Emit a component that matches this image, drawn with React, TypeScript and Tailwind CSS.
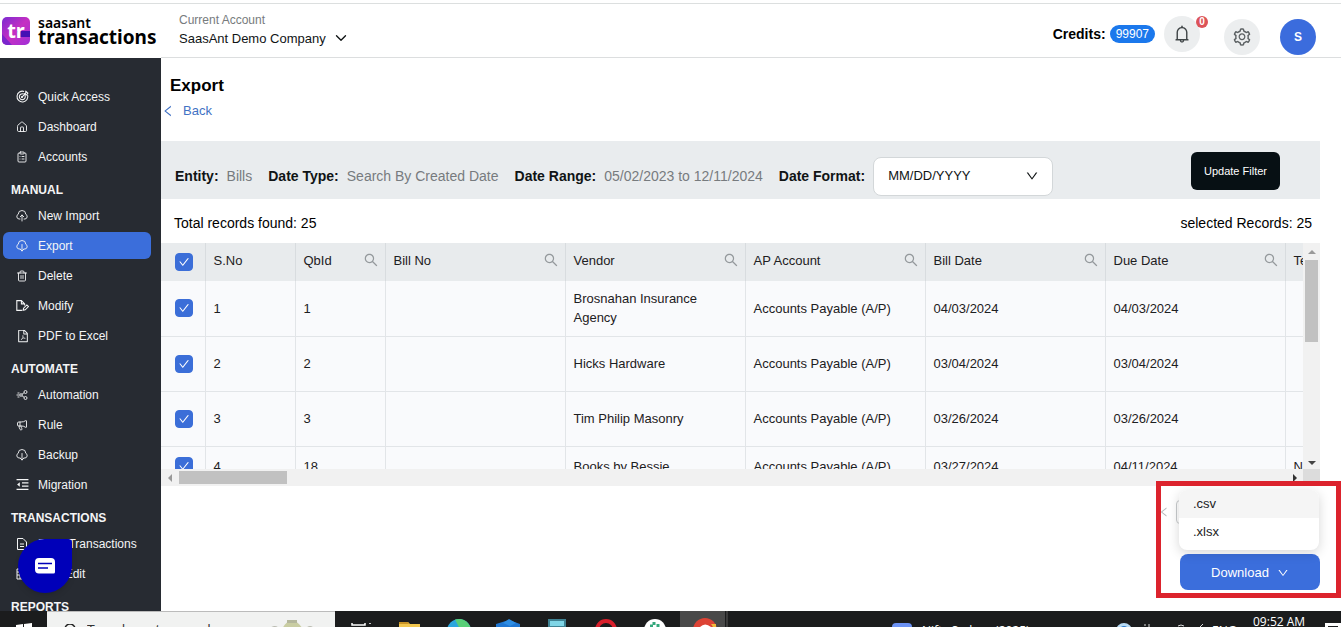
import { ReactNode, useState } from "react";
import {
  AiOutlineBell,
  AiOutlineCheck,
  AiOutlineDown,
  AiOutlineFilePdf,
  AiOutlineLeft,
  AiOutlineSearch,
  AiOutlineSetting,
} from "react-icons/ai";
import { ChevronDown, ClipboardList, House, Megaphone, Trash2 } from "lucide-react";

type NavItem = { label: string; icon: ReactNode };
type NavGroup = { title?: string; items: NavItem[] };

const iconClass = "size-3";

const TargetIcon = () => (
  <svg viewBox="0 0 24 24" className="size-[13px]" fill="none" stroke="currentColor" strokeWidth="2">
    <path d="M15 2.600A10 10 0 1 0 21.400 9" />
    <path d="M13.500 7.200A5.500 5.500 0 1 0 16.800 10.500" />
    <path d="M11 13l7-7M18 6V2l4 4-2.500 3H15V5.500" strokeLinejoin="round" />
    <circle cx="11" cy="13" r="1" />
  </svg>
);

const CloudArrowIcon = ({ up = false }: { up?: boolean }) => (
  <svg viewBox="0 0 24 24" className="size-3" fill="none" stroke="currentColor" strokeWidth="1.800" strokeLinecap="round">
    <path d="M8 18H6a5 5 0 0 1-1.500-9.500A7.500 7.500 0 0 1 19.500 8.500 5 5 0 0 1 18 18h-2" />
    {up ? <path d="M12 22V10M8.500 13.500L12 10l3.500 3.500" /> : <path d="M12 9v13M8.500 18.500L12 22l3.500-3.500" />}
  </svg>
);

const FileEditIcon = () => (
  <svg viewBox="0 0 24 24" className="size-[13px]" fill="none" stroke="currentColor" strokeWidth="2">
    <path d="M11 21H1.500V3H10l6 6v3M10 3v6h6" />
    <path d="M13 21l1-4 6-6 3 3-6 6z" />
  </svg>
);

const NodesIcon = () => (
  <svg viewBox="0 0 24 24" className="size-3" fill="none" stroke="currentColor" strokeWidth="1.800">
    <circle cx="19" cy="6" r="3" />
    <circle cx="19" cy="18" r="3" />
    <circle cx="10" cy="12" r="2.500" />
    <path d="M1 12h6M3 8h4M3 16h4M12 10.500l4-3M12 13.500l4 3" />
  </svg>
);

const MigrationIcon = () => (
  <svg viewBox="0 0 24 24" className="size-[13px]" fill="none" stroke="currentColor" strokeWidth="2">
    <path d="M1 3h22M11 9h12M11 15h12M1 21h22" />
    <path d="M7 8v8l-5-4z" fill="currentColor" stroke="none" />
  </svg>
);

const DocumentIcon = () => (
  <svg viewBox="0 0 24 24" className="size-3" fill="none" stroke="currentColor" strokeWidth="2">
    <path d="M3 1h11l7 7v15H3zM8 12h8M8 17h8" strokeLinejoin="round" />
  </svg>
);

const ListIcon = () => (
  <svg viewBox="0 0 24 24" className="size-3" fill="none" stroke="currentColor" strokeWidth="2">
    <path d="M20 2H2v20h18zM2 8h18M2 14h18M8 8v14" />
  </svg>
);

const navGroups: NavGroup[] = [
  {
    items: [
      { label: "Quick Access", icon: <TargetIcon /> },
      { label: "Dashboard", icon: <House className={iconClass} strokeWidth={1.8} /> },
      { label: "Accounts", icon: <ClipboardList className={iconClass} strokeWidth={1.8} /> },
    ],
  },
  {
    title: "MANUAL",
    items: [
      { label: "New Import", icon: <CloudArrowIcon up /> },
      { label: "Export", icon: <CloudArrowIcon /> },
      { label: "Delete", icon: <Trash2 className={iconClass} strokeWidth={1.8} /> },
      { label: "Modify", icon: <FileEditIcon /> },
      { label: "PDF to Excel", icon: <AiOutlineFilePdf className="size-[14px]" /> },
    ],
  },
  {
    title: "AUTOMATE",
    items: [
      { label: "Automation", icon: <NodesIcon /> },
      { label: "Rule", icon: <Megaphone className={iconClass} strokeWidth={1.8} /> },
      { label: "Backup", icon: <CloudArrowIcon /> },
      { label: "Migration", icon: <MigrationIcon /> },
    ],
  },
  {
    title: "TRANSACTIONS",
    items: [
      { label: "Bank Transactions", icon: <DocumentIcon /> },
      { label: "Bulk Edit", icon: <ListIcon /> },
    ],
  },
  { title: "REPORTS", items: [] },
];

const columns = [
  { label: "S.No", search: false },
  { label: "QbId", search: true },
  { label: "Bill No", search: true },
  { label: "Vendor", search: true },
  { label: "AP Account", search: true },
  { label: "Bill Date", search: true },
  { label: "Due Date", search: true },
  { label: "Terms", search: true },
];

const rows = [
  ["1", "1", "", "Brosnahan Insurance Agency", "Accounts Payable (A/P)", "04/03/2024", "04/03/2024", ""],
  ["2", "2", "", "Hicks Hardware", "Accounts Payable (A/P)", "03/04/2024", "03/04/2024", ""],
  ["3", "3", "", "Tim Philip Masonry", "Accounts Payable (A/P)", "03/26/2024", "03/26/2024", ""],
  ["4", "18", "", "Books by Bessie", "Accounts Payable (A/P)", "03/27/2024", "04/11/2024", "Net 15"],
];

function Logo() {
  return (
    <a href="#home" className="flex w-[161px] shrink-0 items-center gap-2 pl-0.5 text-black">
      <svg viewBox="0 0 28 28" className="size-7 shrink-0">
        <defs>
          <linearGradient id="logoFill" x1="0" y1="0" x2="1" y2="1">
            <stop offset="0" stopColor="#7a2bd2" />
            <stop offset="0.5" stopColor="#c52fc2" />
            <stop offset="1" stopColor="#a02fd8" />
          </linearGradient>
        </defs>
        <rect width="28" height="28" rx="5" fill="url(#logoFill)" />
        <path d="M15 14h13v6H17z" fill="#4410b4" />
        <path d="M0 17l10 11H5a5 5 0 0 1-5-5z" fill="#7a26cc" />
        <text x="14" y="21" textAnchor="middle" fill="#fff" fontSize="20" fontWeight="700" fontFamily="Noto Sans, sans-serif">
          tr
        </text>
      </svg>
      <span className="flex flex-col font-['Noto_Sans',sans-serif]">
        <span className="text-[14px] leading-[13px] font-semibold">saasant</span>
        <span className="text-[19px] leading-[17px] font-bold">transactions</span>
      </span>
    </a>
  );
}

function Header() {
  return (
    <header className="flex h-[55px] shrink-0 border-t border-[#dcdfdf]">
      <Logo />
      <div className="flex flex-1 items-center justify-between border-b border-[#dcdedf] pr-[25px] pl-[18px]">
        <button type="button" className="flex flex-col pb-0.5 text-left text-[13px] leading-[17px]">
          <span className="text-xs leading-[17px] text-[#777b7d]">Current Account</span>
          <span className="flex items-center gap-1.5">
            SaasAnt Demo Company
            <ChevronDown className="size-[18px]" strokeWidth={1.8} />
          </span>
        </button>
        <div className="flex items-center pt-3">
          <div className="mb-1.5 flex items-center">
            <span className="text-sm font-bold text-black">Credits:</span>
            <span className="ml-1 flex h-[18px] items-center rounded-full bg-[#1b78ec] px-1.5 text-xs text-white">99907</span>
            <button
              type="button"
              aria-label="Notifications"
              className="relative ml-[9px] flex size-9 items-center justify-center rounded-full bg-[#eceeef] text-[#3f4547]"
            >
              <AiOutlineBell className="size-5" />
              <span className="absolute top-0 -right-2 flex size-3 items-center justify-center rounded-full bg-[#dc5358] text-[10px] font-bold text-white">
                0
              </span>
            </button>
          </div>
          <button
            type="button"
            aria-label="Settings"
            className="ml-6 flex size-9 items-center justify-center rounded-full bg-[#eceeef] text-[#5c6163]"
          >
            <AiOutlineSetting className="size-5" />
          </button>
          <button type="button" className="ml-5 size-9 rounded-full bg-[#3b6cdd] text-xs font-bold text-white">
            S
          </button>
        </div>
      </div>
    </header>
  );
}

function Sidebar() {
  return (
    <nav className="w-[161px] shrink-0 overflow-hidden bg-[#272b32] pt-[25px] text-xs text-[#f4f5f6]">
      {navGroups.map((group, index) => (
        <div key={index}>
          {group.title ? <h2 className="h-8 pt-3 pl-[11px] text-[12px] leading-4 font-bold">{group.title}</h2> : null}
          <ul className="flex flex-col gap-[3px]">
            {group.items.map((item) => (
              <li key={item.label} className="pr-2.5 pl-[3px]">
                <a
                  href="#nav"
                  className={`flex h-[27px] items-center rounded-md pl-3 whitespace-nowrap ${item.label === "Export" ? "bg-[#3b6edb]" : ""}`}
                >
                  <span className="flex w-[23px] justify-start pl-px">{item.icon}</span>
                  {item.label}
                </a>
              </li>
            ))}
          </ul>
        </div>
      ))}
    </nav>
  );
}

function Filter({ label, value }: { label: string; value: string }) {
  return (
    <p className="mr-4 flex gap-2">
      <span className="font-bold">{label}</span>
      <span className="text-[#777b7e]">{value}</span>
    </p>
  );
}

function FilterBar() {
  return (
    <section className="flex h-[58px] items-center justify-between bg-[#e9ecee] pr-10 pl-[14px] whitespace-nowrap">
      <div className="flex items-center pt-3 text-sm">
        <Filter label="Entity:" value="Bills" />
        <Filter label="Date Type:" value="Search By Created Date" />
        <Filter label="Date Range:" value="05/02/2023 to 12/11/2024" />
        <label htmlFor="date-format" className="font-bold">
          Date Format:
        </label>
        <div className="relative ml-2">
          <select
            id="date-format"
            className="block h-[39px] w-[180px] appearance-none rounded-lg border border-[#d3d7d9] bg-white px-[14px] text-[13px]"
          >
            <option>MM/DD/YYYY</option>
          </select>
          <AiOutlineDown className="pointer-events-none absolute top-3 right-[14px] size-[14px]" />
        </div>
      </div>
      <button type="button" className="mt-0.5 h-[38px] rounded-md bg-[#071014] px-[13px] text-[11px] text-white">
        Update Filter
      </button>
    </section>
  );
}

function CheckBox({ label }: { label: string }) {
  const [checked, setChecked] = useState(true);
  return (
    <label className="relative ml-[14px] block size-[18px]">
      <input
        type="checkbox"
        aria-label={label}
        checked={checked}
        onChange={(event) => setChecked(event.target.checked)}
        className="block size-[18px] appearance-none rounded border border-[#9bb2e8] bg-white checked:border-[#3b6ed8] checked:bg-[#3b6ed8]"
      />
      <AiOutlineCheck className="pointer-events-none absolute top-[3px] left-[3px] size-3 text-white" />
    </label>
  );
}

function BillsTable() {
  return (
    <div className="grid grid-cols-[1fr_17px] grid-rows-[226px_17px] bg-[#f1f1f1]">
      <div className="overflow-hidden">
        <table className="w-[1304px] table-fixed border-collapse bg-[#f9fafc] text-left text-[13px] leading-[19px] text-[#1d2022]">
          <colgroup>
            <col className="w-[44px]" />
            <col className="w-[90px]" />
            <col className="w-[90px]" />
            <col className="w-[180px]" />
            <col className="w-[180px]" />
            <col className="w-[180px]" />
            <col className="w-[180px]" />
            <col className="w-[180px]" />
            <col className="w-[180px]" />
          </colgroup>
          <thead>
            <tr className="h-[38px] bg-[#e8ebed]">
              <th className="border-r border-[#d8dcdf]">
                <CheckBox label="Select all" />
              </th>
              {columns.map((column) => (
                <th key={column.label} className="border-r border-[#d8dcdf] pr-1.5 pl-2 font-normal">
                  <div className="flex items-center justify-between pb-1">
                    {column.label}
                    {column.search ? <AiOutlineSearch className="size-4 text-[#94999c]" /> : null}
                  </div>
                </th>
              ))}
            </tr>
          </thead>
          <tbody>
            {rows.map((row) => (
              <tr key={row[0]} className="h-[55px] border-b border-[#e2e5e8] last:h-10">
                <td className="border-r border-[#e2e5e8]">
                  <CheckBox label={`Select row ${row[0]}`} />
                </td>
                {row.map((cell, index) => (
                  <td key={index} className="border-r border-[#e2e5e8] pr-4 pl-2">
                    {cell}
                  </td>
                ))}
              </tr>
            ))}
          </tbody>
        </table>
      </div>
      <div className="flex flex-col items-center pt-[7px] pb-1">
        <svg viewBox="0 0 8 4" className="h-1 w-2 fill-[#999]">
          <path d="M0 4l4-4 4 4z" />
        </svg>
        <div className="mt-1.5 h-[82px] w-[13px] bg-[#c1c1c1]" />
        <svg viewBox="0 0 8 4" className="mt-auto h-1 w-2 fill-[#444]">
          <path d="M0 0l4 4 4-4z" />
        </svg>
      </div>
      <div className="flex items-center pl-[7px]">
        <svg viewBox="0 0 4 8" className="h-2 w-1 fill-[#999]">
          <path d="M4 0L0 4l4 4z" />
        </svg>
        <div className="ml-[7px] h-[13px] w-[108px] bg-[#c1c1c1]" />
        <svg viewBox="0 0 4 8" className="mr-1.5 ml-auto h-2 w-1 fill-[#333]">
          <path d="M0 0l4 4-4 4z" />
        </svg>
      </div>
      <div className="bg-[#dcdcdc]" />
    </div>
  );
}

function DownloadMenu() {
  return (
    <div className="relative ml-auto flex w-[164px] flex-col pt-1">
      {/* highlight frame around the download options */}
      <div className="pointer-events-none absolute -top-[5px] -right-[21px] -bottom-2 left-0 z-20 border-[5px] border-[#dc232d]" />
      <div className="absolute top-[14px] left-0.5 flex items-center gap-1.5 text-[#b5b8ba]">
        <AiOutlineLeft className="size-3" />
        <span className="size-6 rounded border border-[#c8cbcd]" />
      </div>
      <ul className="z-10 ml-[23px] flex h-[60px] w-[140px] flex-col rounded-lg bg-white text-[13px] text-[#222] shadow-[0_3px_12px_rgba(0,0,0,0.16)]">
        <li>
          <button type="button" className="block h-7 w-full rounded-t-lg bg-[#f5f5f5] px-[14px] text-left">
            .csv
          </button>
        </li>
        <li>
          <button type="button" className="block h-7 w-full px-[14px] text-left">
            .xlsx
          </button>
        </li>
      </ul>
      <button
        type="button"
        className="mt-1 ml-6 flex h-9 w-[140px] items-center justify-center gap-2 rounded-lg bg-[#3b6edc] pt-0.5 text-[13px] text-white"
      >
        Download
        <AiOutlineDown className="size-3" />
      </button>
    </div>
  );
}

function Taskbar() {
  return (
    <footer className="h-4 shrink-0 overflow-hidden bg-[#1b1c1d] font-['Open_Sans',sans-serif] text-white">
      <div className="flex h-10 items-start">
        <button type="button" aria-label="Start" className="flex w-[47px] justify-center pt-3">
          <svg viewBox="0 0 16 16" className="size-4 fill-white">
            <path d="M0 2l7-1v7H0zM8 1l8-1v8H8zM0 9h7v6l-7-1zM8 9h8v7l-8-1z" />
          </svg>
        </button>
        <label className="flex h-10 w-[288px] items-center border-t border-[#bbb] bg-[#f1f2f1] pl-4 text-[#333]">
          <svg viewBox="0 0 16 16" className="size-4" fill="none" stroke="#222" strokeWidth="1.500">
            <circle cx="7" cy="5" r="5" />
            <path d="M4 9l-4 5" />
          </svg>
          <input
            type="text"
            aria-label="Search"
            placeholder="Type here to search"
            className="ml-2 w-[180px] pb-1 text-[14px] placeholder:text-[#333]"
          />
          <svg viewBox="0 0 50 34" className="h-[34px] w-[50px]">
            <path d="M15 15q3-9 10-9t11 9v19H15z" fill="#c9cda2" />
            <path d="M20 5h10v3H20z" fill="#b4b79c" />
            <path d="M2 14q6-6 11 0v10H2zM38 14q5-6 10 0v10H38z" fill="#b9bbb0" />
          </svg>
        </label>
        <svg viewBox="0 0 393 16" className="h-4 w-[393px]">
          <path d="M17 12v2h13v-2M35 12v1" fill="none" stroke="#fff" strokeWidth="1.500" />
          <path d="M64 11h9l2 2h10v3H64z" fill="#f2c64e" />
          <path d="M64 11h9l1 2H64z" fill="#c99325" />
          <circle cx="124" cy="20" r="12" fill="#2ca6dd" />
          <path d="M120 8.600A12 12 0 0 1 136 20h-10z" fill="#58cf77" />
          <path d="M161 16v-3l13-4 11 4v3z" fill="#1f76d2" />
          <path d="M168 12l6-4 7 4-6 3z" fill="#2d8de4" />
          <path d="M213 8h18v8h-18z" fill="#3f8293" />
          <path d="M215 10h14v5h-14z" fill="#7fd5e6" />
          <circle cx="271" cy="19" r="9" fill="none" stroke="#d91f2b" strokeWidth="4" />
          <circle cx="320" cy="19" r="11" fill="#fff" />
          <path d="M319 11v3M323 13v3M315 15h3" stroke="#34a77c" strokeWidth="3" />
          <path d="M345 0h45v16h-45z" fill="#494949" />
          <path d="M391 0h2v16h-2z" fill="#3a3a3a" />
          <circle cx="370" cy="19" r="12" fill="#dd4335" />
          <path d="M365 16q5-5 11 0z" fill="#fff" />
          <path d="M376 13h5v3h-3z" fill="#f0b93a" />
        </svg>
        <span className="mt-3 ml-auto h-5 w-5 rounded bg-[#6c92f4]" />
        <span className="mt-3 ml-2.5 w-[194px] text-xs leading-4">Nifty Smlcap (2025)</span>
        <span className="mt-3 size-4 rounded-full border-[3px] border-[#b8dbf5] bg-[#2a78c9]" />
        <svg viewBox="0 0 80 16" className="h-4 w-20" fill="none" stroke="#ddd">
          <path d="M12 14h2M17 13v3M46 15q3-2 6 0M68 16l3-3" />
        </svg>
        <span className="mt-3 w-[41px] text-xs leading-4">ENG</span>
        <time className="mt-[3px] w-[72px] text-xs leading-4 whitespace-nowrap">09:52 AM</time>
        <span className="mt-3 size-4 border-[3px] border-white" />
      </div>
    </footer>
  );
}

function ChatButton() {
  return (
    <button
      type="button"
      aria-label="Open chat"
      className="fixed bottom-[34px] left-[18px] z-30 flex size-[54px] items-center justify-center rounded-[27px] rounded-tr-sm bg-[#0000b9] shadow-md"
    >
      <svg viewBox="0 0 20 16" className="h-4 w-5">
        <path d="M4 0h12a4 4 0 0 1 4 4v10a1.500 1.500 0 0 1-1.500 1.500H4a4 4 0 0 1-4-4V4a4 4 0 0 1 4-4z" fill="#fff" />
        <path d="M3 5.500h14M3 10h10" stroke="#0000b9" strokeWidth="1.500" />
      </svg>
    </button>
  );
}

export default function App() {
  return (
    <div className="flex h-screen flex-col overflow-hidden bg-white pt-[3px] font-['Liberation_Sans',Arial,sans-serif] text-[#101415]">
      <Header />
      <div className="flex min-h-0 flex-1">
        <Sidebar />
        <main className="min-w-0 flex-1 pr-[21px]">
          <h1 className="pt-4 pl-[9px] text-[17px] leading-6 font-bold text-black">Export</h1>
          <a href="#back" className="mt-[3px] flex w-fit items-center gap-2 text-[13px] leading-5 text-[#4272c4]">
            <AiOutlineLeft className="size-[14px]" />
            Back
          </a>
          <div className="mt-5">
            <FilterBar />
          </div>
          <div className="flex h-[44px] items-center justify-between pt-1 pr-2 pl-[13px] text-sm text-black">
            <p>Total records found: 25</p>
            <p>selected Records: 25</p>
          </div>
          <BillsTable />
          <DownloadMenu />
        </main>
      </div>
      <Taskbar />
      <ChatButton />
    </div>
  );
}
